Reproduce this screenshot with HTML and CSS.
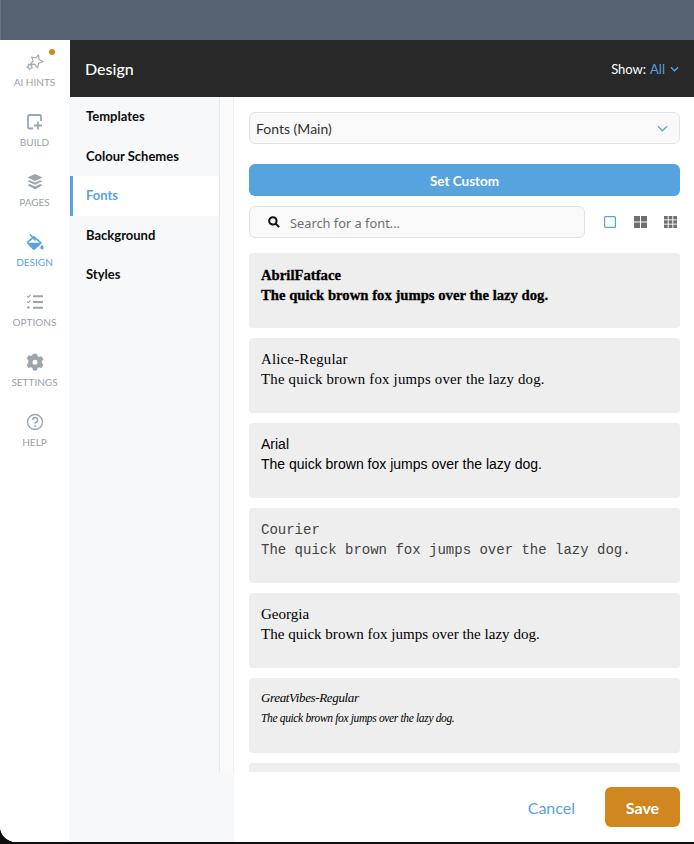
FILE: index.html
```html
<!DOCTYPE html>
<html lang="en">
<head>
<meta charset="utf-8">
<title>Design</title>
<link rel="stylesheet" href="styles.css">
</head>
<body>
<div class="topband"></div>
<div class="app">
  <aside class="rail">
    <a class="rail-item">
      <span class="dot"></span>
      <svg class="rail-icon" viewBox="0 0 20 20" fill="none" stroke="#a3adb4" stroke-width="1.200" stroke-linejoin="round"><path d="M13.500 3l.6 4.400 3.900 2.200-4.300 1.500-1.200 4.900-2.800-3.900-4.400.3 2.800-3.500L6.600 5l4.200 1z"/><path d="M3.500 12.200l1.700.9 1.800-.6-.6 1.900 1 1.600-1.900.1-1.200 1.500-.6-1.800-1.800-.7 1.500-1.100z"/></svg>
      <span>AI HINTS</span>
    </a>
    <a class="rail-item">
      <svg class="rail-icon" viewBox="0 0 20 20" fill="none" stroke="#9aa5ad" stroke-width="1.800"><path d="M8 16.500H4.500a1.500 1.500 0 0 1-1.500-1.500V4.500A1.500 1.500 0 0 1 4.500 3h10A1.500 1.500 0 0 1 16 4.500V9"/><path d="M13 9.500v8M9 13.500h8"/></svg>
      <span>BUILD</span>
    </a>
    <a class="rail-item">
      <svg class="rail-icon" viewBox="0 0 20 20" fill="#9aa5ad"><path d="M10 2l7.500 3.500L10 9 2.500 5.500z"/><path d="M4.800 8.200L10 10.600l5.200-2.400 2.300 1.100L10 12.800 2.500 9.300z"/><path d="M4.800 12l5.200 2.400 5.200-2.400 2.300 1.100L10 17.500l-7.500-4.400z"/></svg>
      <span>PAGES</span>
    </a>
    <a class="rail-item rail-active">
      <svg class="rail-icon" viewBox="0 0 20 20" fill="none" stroke="#57a3dd" stroke-linejoin="round"><path d="M9 4.800l7 6-6.500 6a1 1 0 0 1-1.400 0L3 11.300a1 1 0 0 1 0-1.400z" stroke-width="1.600"/><path d="M3.500 10.800h12.300l-6.300 5.700a.8.800 0 0 1-1.100 0z" fill="#57a3dd" stroke="none"/><path d="M5.500 3l4.500 5" stroke-width="1.700" stroke-linecap="round"/><path d="M17 12.800c.8 1.200 1.700 2 1.700 3a1.700 1.700 0 0 1-3.400 0c0-1 .9-1.800 1.700-3z" fill="#57a3dd" stroke="none"/></svg>
      <span>DESIGN</span>
    </a>
    <a class="rail-item">
      <svg class="rail-icon" viewBox="0 0 20 20" fill="none" stroke="#9aa5ad"><path d="M2 4l1.300 1.300L5.500 2.800M2 9.500l1.300 1.300 2.200-2.500" stroke-width="1.100"/><circle cx="3.300" cy="15.500" r="1.300" fill="#9aa5ad" stroke="none"/><path d="M8 4.200h10M8 10h10M8 15.800h10" stroke-width="2"/></svg>
      <span>OPTIONS</span>
    </a>
    <a class="rail-item">
      <svg class="rail-icon" viewBox="0 0 20 20"><path fill="#9aa5ad" fill-rule="evenodd" d="M8 1.800h4l.6 2.400 1.500.8 2.300-.8 2 3.400-1.700 1.700v1.700l1.700 1.700-2 3.400-2.300-.8-1.500.8-.6 2.400H8l-.6-2.400-1.500-.8-2.300.8-2-3.400 1.700-1.700V8.300L1.600 6.600l2-3.400 2.300.8 1.500-.8zM10 7.700a2.500 2.500 0 1 0 0 5 2.500 2.500 0 0 0 0-5z"/></svg>
      <span>SETTINGS</span>
    </a>
    <a class="rail-item">
      <svg class="rail-icon" viewBox="0 0 20 20" fill="none" stroke="#9aa5ad"><circle cx="10" cy="10" r="7.500" stroke-width="1.400"/><path d="M7.700 8a2.400 2.400 0 1 1 3.500 2.100c-.8.500-1.200.9-1.200 1.700" stroke-width="1.600"/><circle cx="10" cy="14" r="1" fill="#9aa5ad" stroke="none"/></svg>
      <span>HELP</span>
    </a>
  </aside>
  <div class="panel">
    <header class="panel-head">
      <h1 class="panel-title">Design</h1>
      <div class="show">Show: <span class="show-val">All</span>
        <svg class="chev-sm" viewBox="0 0 10 6" fill="none" stroke="#57a3dd" stroke-width="1.500"><path d="M1 1l4 4 4-4"/></svg>
      </div>
    </header>
    <div class="panel-body">
      <div class="side">
        <nav class="nav">
          <a class="nav-item">Templates</a>
          <a class="nav-item">Colour Schemes</a>
          <a class="nav-item nav-active">Fonts</a>
          <a class="nav-item">Background</a>
          <a class="nav-item">Styles</a>
        </nav>
        <div class="strip"></div>
      </div>
      <main class="content">
        <div class="scroll">
          <div class="select">
            <span>Fonts (Main)</span>
            <svg class="chev" viewBox="0 0 12 7" fill="none" stroke="#57a3dd" stroke-width="1.400"><path d="M1 1l5 5 5-5"/></svg>
          </div>
          <button class="set-custom">Set Custom</button>
          <div class="search-row">
            <div class="search">
              <svg class="search-icon" viewBox="0 0 14 14" fill="none" stroke="#111" stroke-width="2.400"><circle cx="5.700" cy="5.700" r="4.300"/><path d="M8.800 8.800l4.200 4.200"/></svg>
              <span>Search for a font...</span>
            </div>
            <div class="views">
              <svg class="view" viewBox="0 0 12 12" fill="none" stroke="#57a3dd" stroke-width="1.200"><rect x=".6" y=".6" width="10.800" height="10.800" rx="1"/></svg>
              <svg class="view view-2" viewBox="0 0 13 12" fill="#6f6f6f"><rect width="6" height="5.500"/><rect x="7" width="6" height="5.500"/><rect y="6.500" width="6" height="5.500"/><rect x="7" y="6.500" width="6" height="5.500"/></svg>
              <svg class="view view-3" viewBox="0 0 13 12" fill="#6f6f6f"><rect width="3.700" height="3.400"/><rect x="4.650" width="3.700" height="3.400"/><rect x="9.300" width="3.700" height="3.400"/><rect y="4.300" width="3.700" height="3.400"/><rect x="4.650" y="4.300" width="3.700" height="3.400"/><rect x="9.300" y="4.300" width="3.700" height="3.400"/><rect y="8.600" width="3.700" height="3.400"/><rect x="4.650" y="8.600" width="3.700" height="3.400"/><rect x="9.300" y="8.600" width="3.700" height="3.400"/></svg>
            </div>
          </div>
          <div class="cards">
            <div class="card f-abril"><div>AbrilFatface</div><div>The quick brown fox jumps over the lazy dog.</div></div>
            <div class="card f-alice"><div>Alice-Regular</div><div>The quick brown fox jumps over the lazy dog.</div></div>
            <div class="card f-arial"><div>Arial</div><div>The quick brown fox jumps over the lazy dog.</div></div>
            <div class="card f-courier"><div>Courier</div><div>The quick brown fox jumps over the lazy dog.</div></div>
            <div class="card f-georgia"><div>Georgia</div><div>The quick brown fox jumps over the lazy dog.</div></div>
            <div class="card f-vibes"><div class="vibes-name">GreatVibes-Regular</div><div>The quick brown fox jumps over the lazy dog.</div></div>
            <div class="card"></div>
          </div>
        </div>
        <footer class="foot">
          <a class="cancel">Cancel</a>
          <button class="save">Save</button>
        </footer>
      </main>
    </div>
  </div>
</div>
</body>
</html>
```
FILE: styles.css
```css
* { box-sizing: border-box; }
html, body { margin: 0; height: 844px; overflow: hidden; }
body { background: #0c0f10; font-family: Lato, "Noto Sans", sans-serif; }
.topband { height: 40px; background: #566373; border-left: 1px solid #6b7583; }
.app { display: flex; height: 802px; background: #fff; border-bottom-left-radius: 16px; overflow: hidden; }

.rail { width: 69px; flex: none; background: #fff; display: flex; flex-direction: column; align-items: center; padding-top: 12px; }
.rail-item { position: relative; height: 60px; width: 100%; display: flex; flex-direction: column; align-items: center; font-size: 10px; line-height: 12px; color: #96a2aa; }
.rail-icon { width: 20px; height: 20px; margin-bottom: 4px; }
.rail-active { color: #57a3dd; }
.dot { position: absolute; top: -3px; left: 49px; width: 6px; height: 6px; border-radius: 50%; background: #d2861f; }

.panel { flex: 1; min-width: 0; display: flex; flex-direction: column; }
.panel-head { height: 57px; flex: none; margin-left: 1px; background: #282828; color: #fff; display: flex; align-items: center; justify-content: space-between; padding: 0 15px; }
.panel-title { margin: 0; font-size: 16px; font-weight: 500; }
.show { font-size: 13px; display: flex; align-items: center; gap: 4px; }
.show-val { color: #57a3dd; }
.chev-sm { width: 9px; height: 6px; margin-left: 1px; }

.panel-body { flex: 1; min-height: 0; display: flex; }
.side { width: 165px; flex: none; background: #f7f8fa; display: flex; }
.nav { width: 151px; flex: none; border-right: 1px solid #e6e7e8; height: 675px; }
.nav-item { display: block; height: 39.500px; line-height: 39px; padding-left: 16px; margin-left: 1px; font-size: 13px; font-weight: 700; color: #0c0c0c; }
.nav-active { background: #fff; color: #57a3dd; border-left: 3px solid #57a3dd; padding-left: 13px; }
.strip { width: 14px; height: 675px; background: #fafafa; border-right: 1px solid #eeeeee; }

.content { flex: 1; min-width: 0; display: flex; flex-direction: column; background: #fff; }
.scroll { height: 675px; overflow: hidden; padding: 15px 14px 0 15px; }
.select { height: 32px; border: 1px solid #e2e2e2; border-radius: 6px; background: #f9f9f9; display: flex; align-items: center; justify-content: space-between; padding: 1px 11px 0 6px; font-size: 14px; color: #333; }
.chev { width: 11px; height: 7px; }
.set-custom { display: block; width: 100%; height: 32px; margin-top: 20px; padding: 2px 0 0; border: 0; border-radius: 6px; background: #57a3dd; color: #fff; font: 700 13.500px Lato, sans-serif; }
.search-row { display: flex; align-items: center; justify-content: space-between; margin-top: 10px; }
.search { width: 336px; height: 32px; border: 1px solid #e2e2e2; border-radius: 6px; background: #f9f9f9; display: flex; align-items: center; gap: 10px; padding: 2px 0 0 18px; font-family: "Noto Sans", sans-serif; font-size: 12.800px; color: #6f6f6f; }
.search-icon { width: 12px; height: 12px; margin-top: -2px; }
.views { display: flex; align-items: center; gap: 17.500px; padding-right: 3px; }
.view { width: 12px; height: 12px; display: block; }
.view-2, .view-3 { width: 13px; }

.cards { display: flex; flex-direction: column; gap: 10px; margin-top: 15px; }
.card { height: 75px; flex: none; background: #eeeeee; border-radius: 4px; padding: 11px 12px; font-size: 14px; line-height: 20px; color: #000; }
.f-abril { padding-top: 12px; font-family: "Liberation Serif", serif; font-weight: 700; font-size: 14.700px; -webkit-text-stroke: .3px #000; }
.f-alice { font-family: "Liberation Serif", serif; font-size: 14.800px; letter-spacing: .22px; }
.f-arial { font-family: "Liberation Sans", sans-serif; font-size: 14px; }
.f-courier { padding-top: 12px; font-family: "Liberation Mono", monospace; font-size: 14px; color: #444; }
.f-georgia { font-family: "Liberation Serif", serif; font-size: 15.050px; }
.f-vibes { padding-top: 9px; font-family: "Liberation Serif", serif; font-style: italic; font-size: 11.500px; letter-spacing: -.35px; line-height: 21px; }
.vibes-name { font-size: 13px; }

.foot { flex: 1; display: flex; align-items: center; justify-content: flex-end; gap: 30px; padding: 0 14px 0 0; }
.cancel { font-size: 16px; color: #57a3dd; }
.save { width: 75px; height: 40px; border: 0; border-radius: 6px; background: #d2861f; color: #fff; font: 700 16px Lato, sans-serif; }
```
